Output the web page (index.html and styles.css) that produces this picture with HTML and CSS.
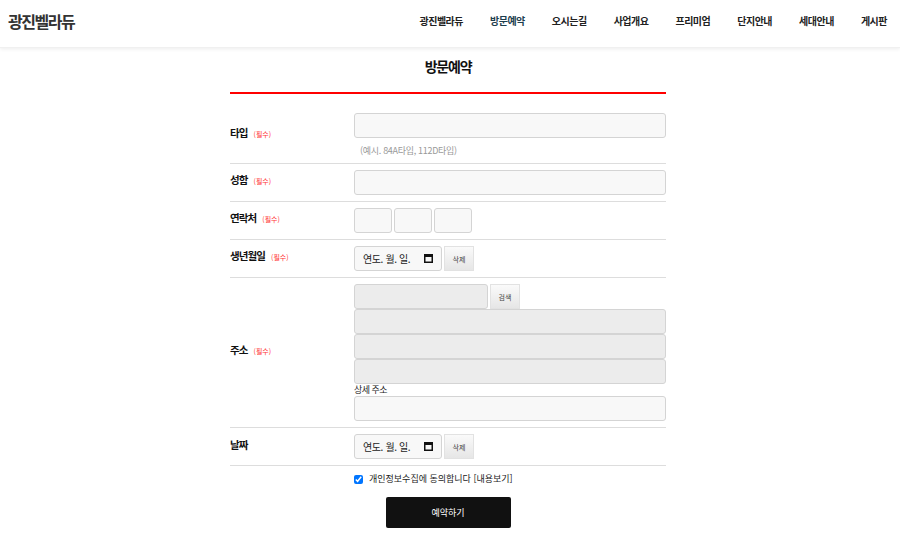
FILE: index.html
```html
<!DOCTYPE html>
<html lang="ko">
<head>
<meta charset="utf-8">
<title>방문예약</title>
<link rel="stylesheet" href="styles.css">
</head>
<body>
<header class="site-header">
  <div class="logo">광진벨라듀</div>
  <nav class="gnb">
    <a class="gnb-item">광진벨라듀</a>
    <a class="gnb-item active">방문예약</a>
    <a class="gnb-item">오시는길</a>
    <a class="gnb-item">사업개요</a>
    <a class="gnb-item">프리미엄</a>
    <a class="gnb-item">단지안내</a>
    <a class="gnb-item">세대안내</a>
    <a class="gnb-item">게시판</a>
  </nav>
</header>

<main class="content">
  <h1 class="page-title">방문예약</h1>
  <div class="title-line"></div>

  <table class="form-table">
    <tr>
      <th><span class="lbl">타입</span><span class="req">(필수)</span></th>
      <td>
        <div class="field full"></div>
        <p class="hint">(예시. 84A타입, 112D타입)</p>
      </td>
    </tr>
    <tr>
      <th><span class="lbl">성함</span><span class="req">(필수)</span></th>
      <td><div class="field full"></div></td>
    </tr>
    <tr>
      <th><span class="lbl">연락처</span><span class="req">(필수)</span></th>
      <td>
        <div class="inline">
          <div class="field phone"></div>
          <div class="field phone"></div>
          <div class="field phone"></div>
        </div>
      </td>
    </tr>
    <tr>
      <th><span class="lbl">생년월일</span><span class="req">(필수)</span></th>
      <td>
        <div class="inline">
          <div class="field date"><span class="date-text">연도. 월. 일.</span>
            <svg class="cal" width="9" height="9" viewBox="0 0 9 9"><rect x="0.75" y="0.75" width="7.5" height="7.5" fill="none" stroke="#111" stroke-width="1.5"/><rect x="0" y="0" width="9" height="3" fill="#111"/></svg>
          </div>
          <button class="btn-sm">삭제</button>
        </div>
      </td>
    </tr>
    <tr>
      <th><span class="lbl">주소</span><span class="req">(필수)</span></th>
      <td>
        <div class="inline">
          <div class="field zip ro"></div>
          <button class="btn-sm">검색</button>
        </div>
        <div class="field full ro"></div>
        <div class="field full ro"></div>
        <div class="field full ro"></div>
        <div class="sub-label">상세 주소</div>
        <div class="field full"></div>
      </td>
    </tr>
    <tr>
      <th><span class="lbl">날짜</span></th>
      <td>
        <div class="inline">
          <div class="field date"><span class="date-text">연도. 월. 일.</span>
            <svg class="cal" width="9" height="9" viewBox="0 0 9 9"><rect x="0.75" y="0.75" width="7.5" height="7.5" fill="none" stroke="#111" stroke-width="1.5"/><rect x="0" y="0" width="9" height="3" fill="#111"/></svg>
          </div>
          <button class="btn-sm">삭제</button>
        </div>
      </td>
    </tr>
  </table>

  <div class="agree">
    <input type="checkbox" class="agree-check" checked>
    <span class="agree-text">개인정보수집에 동의합니다 [내용보기]</span>
  </div>

  <div class="submit-wrap">
    <button class="btn-submit">예약하기</button>
  </div>
</main>
</body>
</html>
```

FILE: styles.css
```css
* { box-sizing: border-box; }

body {
  margin: 0;
  background: #fff;
  font-family: "Noto Sans CJK KR", "Noto Sans", sans-serif;
  color: #222;
}

.site-header {
  height: 48px;
  display: flex;
  justify-content: space-between;
  align-items: flex-start;
  padding: 0 13px 0 8px;
  box-shadow: 0 1px 4px rgba(0, 0, 0, 0.08);
  border-bottom: 1px solid #f0f0f0;
}

.logo {
  margin-top: 10px;
  font-size: 16px;
  line-height: 22px;
  font-weight: 700;
  letter-spacing: -1.5px;
  color: #333;
}

.gnb {
  display: flex;
  gap: 27px;
  margin-top: 13px;
}

.gnb-item {
  font-size: 10px;
  line-height: 15px;
  font-weight: 700;
  letter-spacing: -0.5px;
  color: #222;
  text-decoration: none;
}

.gnb-item.active { color: #1d3e4e; }

.content {
  width: 436px;
  margin-left: calc(50% - 220px);
}

.page-title {
  margin: 0;
  padding-top: 8px;
  text-align: center;
  font-size: 14px;
  line-height: 20px;
  font-weight: 700;
  letter-spacing: -1.2px;
  color: #111;
}

.title-line {
  margin-top: 16px;
  height: 2px;
  background: #f00;
}

.form-table {
  width: 100%;
  margin-top: 13px;
  border-collapse: collapse;
}

.form-table th,
.form-table td {
  border-bottom: 1px solid #ddd;
  padding: 6px 0;
  vertical-align: middle;
}

.form-table th {
  width: 124px;
  text-align: left;
  padding-bottom: 10px;
  white-space: nowrap;
  font-size: 10px;
  line-height: 14px;
}

.lbl {
  font-size: 10.5px;
  font-weight: 700;
  letter-spacing: -0.9px;
  color: #111;
}

.req {
  margin-left: 6px;
  font-size: 7px;
  font-weight: 400;
  color: #f33;
}

.field {
  height: 25px;
  border: 1px solid #d4d4d4;
  border-radius: 3px;
  background: #f8f8f8;
}

.field.full { width: 312px; }
.field.ro { background: #ececec; }
.field.phone { width: 38px; }
.field.zip { width: 134px; }

.field.date {
  width: 88px;
  display: flex;
  align-items: center;
  justify-content: space-between;
  padding: 0 8px 0 8px;
}

.date-text {
  font-size: 10px;
  color: #222;
  letter-spacing: -0.4px;
}

.cal { display: block; }

.inline {
  display: flex;
  gap: 2px;
}

.btn-sm {
  width: 30px;
  height: 25px;
  margin: 0;
  padding: 0;
  border: 1px solid #e2e2e2;
  border-radius: 0;
  background: linear-gradient(#fafafa, #e6e6e6);
  font-family: inherit;
  font-size: 7px;
  color: #444;
}

.hint {
  margin: 0;
  padding: 7px 0 0 6px;
  font-size: 9px;
  line-height: 12px;
  color: #999;
  letter-spacing: -0.3px;
}

.sub-label {
  font-size: 9px;
  line-height: 12px;
  color: #222;
  letter-spacing: -0.5px;
}

.agree {
  display: flex;
  align-items: center;
  gap: 6px;
  margin-left: 124px;
  margin-top: 7px;
  height: 12px;
}

.agree-check {
  width: 9px;
  height: 9px;
  margin: 0;
}

.agree-text {
  font-size: 9px;
  line-height: 12px;
  color: #222;
}

.submit-wrap {
  display: flex;
  justify-content: center;
  margin-top: 12px;
}

.btn-submit {
  width: 125px;
  height: 31px;
  border: 0;
  border-radius: 2px;
  background: #111;
  color: #fff;
  font-family: inherit;
  font-size: 9px;
}
```
